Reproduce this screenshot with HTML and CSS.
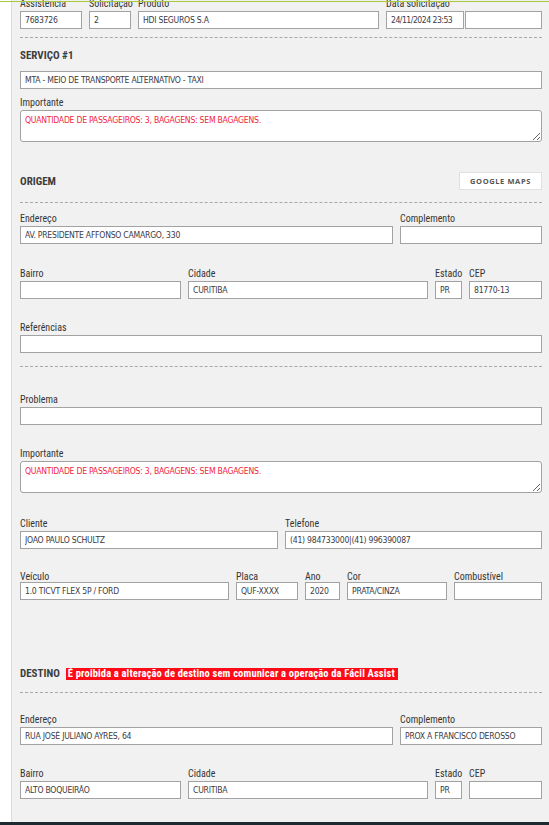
FILE: index.html
```html
<!DOCTYPE html>
<html lang="pt-BR">
<head>
<meta charset="utf-8">
<title>Serviço</title>
<link rel="stylesheet" href="styles.css">
</head>
<body>
<div class="topline"></div>
<div class="panel">
  <div class="row first">
    <div class="field w-assist"><div class="lbl">Assistência</div><input class="inp" value="7683726" readonly></div>
    <div class="field w-solic"><div class="lbl">Solicitação</div><input class="inp" value="2" readonly></div>
    <div class="field w-prod"><div class="lbl">Produto</div><input class="inp" value="HDI SEGUROS S.A" readonly></div>
    <div class="field grow"><div class="lbl">Data solicitação</div>
      <div class="pair"><input class="inp tight" value="24/11/2024 23:53" readonly><input class="inp" value="" readonly></div>
    </div>
  </div>

  <hr class="dash d-top">
  <div class="title t-serv">SERVIÇO #1</div>
  <input class="inp block m-mta" value="MTA - MEIO DE TRANSPORTE ALTERNATIVO - TAXI" readonly>
  <div class="field m-imp1"><div class="lbl">Importante</div><textarea class="txt" readonly>QUANTIDADE DE PASSAGEIROS: 3, BAGAGENS: SEM BAGAGENS.</textarea></div>

  <div class="head m-origem"><span class="title">ORIGEM</span><button class="btn" type="button">GOOGLE MAPS</button></div>
  <hr class="dash d-origem">

  <div class="row m-end1">
    <div class="field w-end"><div class="lbl">Endereço</div><input class="inp" value="AV. PRESIDENTE AFFONSO CAMARGO, 330" readonly></div>
    <div class="field grow"><div class="lbl">Complemento</div><input class="inp" value="" readonly></div>
  </div>
  <div class="row m-bairro1">
    <div class="field w-bairro"><div class="lbl">Bairro</div><input class="inp" value="" readonly></div>
    <div class="field w-cidade"><div class="lbl">Cidade</div><input class="inp" value="CURITIBA" readonly></div>
    <div class="field w-uf"><div class="lbl">Estado</div><input class="inp" value="PR" readonly></div>
    <div class="field grow"><div class="lbl">CEP</div><input class="inp" value="81770-13" readonly></div>
  </div>
  <div class="row m-ref">
    <div class="field grow"><div class="lbl">Referências</div><input class="inp" value="" readonly></div>
  </div>
  <hr class="dash d-mid">

  <div class="row m-prob">
    <div class="field grow"><div class="lbl">Problema</div><input class="inp" value="" readonly></div>
  </div>
  <div class="field m-imp2"><div class="lbl">Importante</div><textarea class="txt" readonly>QUANTIDADE DE PASSAGEIROS: 3, BAGAGENS: SEM BAGAGENS.</textarea></div>
  <div class="row m-cli">
    <div class="field w-cli"><div class="lbl">Cliente</div><input class="inp" value="JOAO PAULO SCHULTZ" readonly></div>
    <div class="field grow"><div class="lbl">Telefone</div><input class="inp" value="(41) 984733000|(41) 996390087" readonly></div>
  </div>
  <div class="row m-vei">
    <div class="field w-vei"><div class="lbl low">Veículo</div><input class="inp" value="1.0 TICVT FLEX 5P / FORD" readonly></div>
    <div class="field w-placa"><div class="lbl low">Placa</div><input class="inp" value="QUF-XXXX" readonly></div>
    <div class="field w-ano"><div class="lbl low">Ano</div><input class="inp" value="2020" readonly></div>
    <div class="field w-cor"><div class="lbl low">Cor</div><input class="inp" value="PRATA/CINZA" readonly></div>
    <div class="field grow"><div class="lbl low">Combustível</div><input class="inp" value="" readonly></div>
  </div>

  <div class="head m-destino"><span class="title">DESTINO</span><span class="alert">É proibida a alteração de destino sem comunicar a operação da Fácil Assist</span></div>
  <hr class="dash d-destino">

  <div class="row m-end2">
    <div class="field w-end"><div class="lbl">Endereço</div><input class="inp" value="RUA JOSÉ JULIANO AYRES, 64" readonly></div>
    <div class="field grow"><div class="lbl">Complemento</div><input class="inp" value="PROX A FRANCISCO DEROSSO" readonly></div>
  </div>
  <div class="row m-bairro2">
    <div class="field w-bairro"><div class="lbl">Bairro</div><input class="inp" value="ALTO BOQUEIRÃO" readonly></div>
    <div class="field w-cidade"><div class="lbl">Cidade</div><input class="inp" value="CURITIBA" readonly></div>
    <div class="field w-uf"><div class="lbl">Estado</div><input class="inp" value="PR" readonly></div>
    <div class="field grow"><div class="lbl">CEP</div><input class="inp" value="" readonly></div>
  </div>
</div>
<div class="footbar"></div>
</body>
</html>
```
FILE: styles.css
```css
html, body { margin: 0; padding: 0; background: #ffffff; }
body { overflow: hidden; height: 825px; font-family: "Roboto Condensed", "DejaVu Sans Condensed", sans-serif; color: #333; }

.topline { position: fixed; top: 1px; left: 0; right: 0; height: 1px; background: #a6ca3a; z-index: 5; }
.footbar { position: fixed; bottom: 0; left: 0; right: 0; height: 3px; background: #1d2b30; z-index: 5; }

.panel {
  margin-left: 11px;
  border-left: 1px solid #dcdcdc;
  background: #f1f1f1;
  padding: 0 7px 200px 8px;
}

.row { display: flex; gap: 7px; }
.field { display: flex; flex-direction: column; min-width: 0; }
.grow { flex: 1; }
.pair { display: flex; gap: 1px; }
.pair .inp { flex: 1; min-width: 0; }

.lbl {
  box-sizing: border-box;
  font-family: "Roboto Condensed", "DejaVu Sans Condensed", sans-serif;
  font-size: 10px;
  line-height: 14px;
  height: 14px;
  padding-top: 2px;
  margin-bottom: 2px;
  color: #363636;
  white-space: nowrap;
}
.lbl.low { line-height: 17px; height: 17px; margin-bottom: -1px; }

.inp {
  box-sizing: border-box;
  height: 18px;
  width: 100%;
  margin: 0;
  padding: 0 4px;
  border: 1px solid #a2a2a2;
  border-radius: 0;
  background: #fff;
  font-family: "DejaVu Sans Condensed", "DejaVu Sans", sans-serif;
  font-size: 8.6px;
  letter-spacing: -0.25px;
  color: #3b3b45;
  outline: none;
}
.inp.tight { letter-spacing: -0.5px; }
.block { display: block; }

.txt {
  display: block;
  box-sizing: border-box;
  width: 100%;
  height: 32px;
  margin: 0;
  padding: 3px 4px;
  border: 1px solid #a2a2a2;
  border-radius: 3px;
  background: #fff;
  font-family: "DejaVu Sans Condensed", "DejaVu Sans", sans-serif;
  font-size: 8.6px;
  letter-spacing: -0.25px;
  line-height: 12px;
  color: #f2243f;
  resize: vertical;
  outline: none;
}

.title {
  font-family: "Roboto Condensed", "DejaVu Sans Condensed", sans-serif;
  font-size: 11px;
  font-weight: 700;
  line-height: 14px;
  color: #3d3d3d;
  white-space: nowrap;
}
.head .title { padding-top: 2px; }

.dash {
  border: 0;
  border-top: 1px dashed #a8a8a8;
  height: 0;
  margin: 0;
}

.head { display: flex; align-items: center; height: 18px; }
.btn {
  margin-left: auto;
  box-sizing: border-box;
  width: 83px;
  height: 18px;
  padding: 0;
  background: #fff;
  border: 1px solid #e0e0e0;
  font-family: "Open Sans", "DejaVu Sans", sans-serif;
  font-size: 7.5px;
  font-weight: 700;
  letter-spacing: 0.6px;
  color: #555;
}
.alert {
  margin-left: 6px;
  margin-top: 2px;
  background: #ff0a17;
  color: #fff;
  font-family: "Roboto Condensed", "DejaVu Sans Condensed", sans-serif;
  font-size: 10.5px;
  letter-spacing: 0.15px;
  font-weight: 700;
  line-height: 12px;
  padding: 0 3px 0 2px;
  white-space: nowrap;
}

/* widths */
.w-assist { width: 62px; }
.w-solic { width: 42px; }
.w-prod { width: 241px; }
.w-end { width: 373px; }
.w-bairro { width: 161px; }
.w-cidade { width: 240px; }
.w-uf { width: 27px; }
.w-cli { width: 258px; }
.w-vei { width: 209px; }
.w-placa { width: 62px; }
.w-ano { width: 35px; }
.w-cor { width: 100px; }

/* vertical rhythm */
.first { margin-top: -5px; }
.d-top { margin-top: 8px; }
.t-serv { display: block; margin-top: 11px; }
.m-mta { margin-top: 8px; }
.m-imp1 { margin-top: 5px; }
.m-origem { margin-top: 30px; }
.d-origem { margin-top: 12px; }
.m-end1 { margin-top: 7px; }
.m-bairro1 { margin-top: 21px; }
.m-ref { margin-top: 20px; }
.d-mid { margin-top: 13px; }
.m-prob { margin-top: 24px; }
.m-imp2 { margin-top: 20px; }
.m-cli { margin-top: 22px; }
.m-vei { margin-top: 17px; }
.m-destino { margin-top: 64px; }
.d-destino { margin-top: 10px; }
.m-end2 { margin-top: 18px; }
.m-bairro2 { margin-top: 20px; }
```
